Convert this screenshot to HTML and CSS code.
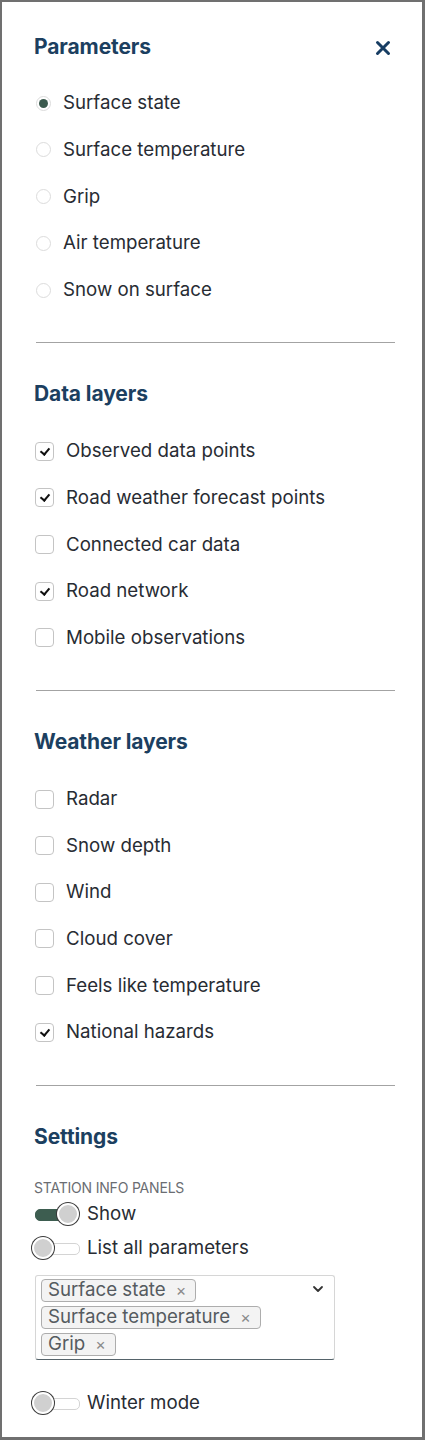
FILE: index.html
```html
<!DOCTYPE html>
<html lang="en">
<head>
<meta charset="utf-8">
<title>Parameters</title>
<link rel="stylesheet" href="styles.css">
</head>
<body>
<div class="panel">
  <section class="section">
    <div class="head-row">
      <h2 class="heading">Parameters</h2>
      <button class="close" aria-label="Close">
        <svg width="16" height="16" viewBox="0 0 16 16"><path d="M2.5 2.5 L13.5 13.5 M13.5 2.5 L2.5 13.5" stroke="#173d63" stroke-width="3" stroke-linecap="round"/></svg>
      </button>
    </div>
    <ul class="list radios">
      <li class="item"><span class="radio on"></span><span class="label r">Surface state</span></li>
      <li class="item"><span class="radio"></span><span class="label r">Surface temperature</span></li>
      <li class="item"><span class="radio"></span><span class="label r">Grip</span></li>
      <li class="item"><span class="radio"></span><span class="label r">Air temperature</span></li>
      <li class="item"><span class="radio"></span><span class="label r">Snow on surface</span></li>
    </ul>
  </section>
  <hr class="divider">
  <section class="section">
    <h2 class="heading">Data layers</h2>
    <ul class="list checks">
      <li class="item"><span class="box on"></span><span class="label">Observed data points</span></li>
      <li class="item"><span class="box on"></span><span class="label">Road weather forecast points</span></li>
      <li class="item"><span class="box"></span><span class="label">Connected car data</span></li>
      <li class="item"><span class="box on"></span><span class="label">Road network</span></li>
      <li class="item"><span class="box"></span><span class="label">Mobile observations</span></li>
    </ul>
  </section>
  <hr class="divider">
  <section class="section">
    <h2 class="heading">Weather layers</h2>
    <ul class="list checks">
      <li class="item"><span class="box"></span><span class="label">Radar</span></li>
      <li class="item"><span class="box"></span><span class="label">Snow depth</span></li>
      <li class="item"><span class="box"></span><span class="label">Wind</span></li>
      <li class="item"><span class="box"></span><span class="label">Cloud cover</span></li>
      <li class="item"><span class="box"></span><span class="label">Feels like temperature</span></li>
      <li class="item"><span class="box on"></span><span class="label">National hazards</span></li>
    </ul>
  </section>
  <hr class="divider">
  <section class="section settings">
    <h2 class="heading">Settings</h2>
    <div class="caption">STATION INFO PANELS</div>
    <div class="toggle-row show-row"><span class="toggle on"><span class="knob"></span></span><span class="label t">Show</span></div>
    <div class="toggle-row list-row"><span class="toggle"><span class="knob"></span></span><span class="label t">List all parameters</span></div>
    <div class="multi">
      <div class="chips">
        <span class="chip">Surface state <span class="x">×</span></span>
        <span class="chip">Surface temperature <span class="x">×</span></span>
        <span class="chip">Grip <span class="x">×</span></span>
      </div>
      <svg class="chev" width="12" height="8" viewBox="0 0 12 8"><path d="M2 2 L6 6 L10 2" fill="none" stroke="#333" stroke-width="1.8" stroke-linecap="round" stroke-linejoin="round"/></svg>
    </div>
    <div class="toggle-row winter-row"><span class="toggle"><span class="knob"></span></span><span class="label t">Winter mode</span></div>
  </section>
</div>
</body>
</html>
```
FILE: styles.css
```css
* { box-sizing: border-box; }
html, body { margin: 0; padding: 0; background: #fff; }
body { font-family: Inter, "Noto Sans", sans-serif; color: #2a2f37; }
.panel {
  width: 425px;
  height: 1440px;
  border-style: solid;
  border-color: #707070;
  border-width: 2px 3px 3px 2px;
  padding: 33px 27px 0 32px;
}
.section { display: flex; flex-direction: column; }
.head-row { display: flex; align-items: center; justify-content: space-between; }
.heading {
  margin: 0;
  font-size: 21px;
  line-height: 24px;
  font-weight: 700;
  color: #1c3f60;
  letter-spacing: -0.1px;
}
.close {
  border: 0; background: none; padding: 0; margin-right: 4px; margin-top: 2px;
  width: 16px; height: 16px; display: flex;
}
.list { list-style: none; margin: 0; padding: 0; display: flex; flex-direction: column; }
.radios { margin-top: 32px; gap: 22.75px; }
.checks { margin-top: 33px; gap: 22.6px; }
.item { display: flex; align-items: center; height: 24px; }
.label { font-size: 18.7px; line-height: 24px; color: #282c33; letter-spacing: 0; }
.radio {
  width: 15px; height: 15px; border-radius: 50%;
  border: 1px solid #dcdcdc; margin-left: 2px; margin-right: 12px;
  flex: none; position: relative; background: #fff;
}
.radio.on::after {
  content: ""; position: absolute; left: 2px; top: 2px;
  width: 9px; height: 9px; border-radius: 50%; background: #3b5a4e;
}
.box {
  width: 19px; height: 19px; border-radius: 4px;
  border: 1.5px solid #c4c4c4; margin-left: 1px; margin-right: 12px;
  flex: none; position: relative; background: #fff;
}
.box.on::after {
  content: ""; position: absolute; left: 6px; top: 3px;
  width: 4px; height: 7px;
  border-right: 2px solid #111; border-bottom: 2px solid #111;
  transform: rotate(40deg);
}
.divider {
  border: 0; border-top: 1px solid #a3a3a3; margin: 40.4px 0 39px 2px; height: 0;
}
.caption {
  margin-top: 31px;
  font-size: 14px; line-height: 16px; color: #6a6d72; letter-spacing: -0.2px;
}
.toggle-row { display: flex; align-items: center; height: 24px; }
.show-row { margin-top: 6px; }
.list-row { margin-top: 10px; }
.winter-row { margin-top: 31px; }
.toggle {
  position: relative; width: 48px; height: 22px; margin-left: -2px; margin-right: 7px; flex: none;
}
.toggle::before {
  content: ""; position: absolute; left: 6px; top: 6px; width: 40px; height: 10px;
  border-radius: 5px; border: 1px solid #d4d4d4; background: #fff;
}
.toggle.on::before { background: #3d5d50; border-color: #3d5d50; left: 3px; width: 36px; }
.knob {
  position: absolute; left: 0; top: 0; width: 22px; height: 22px; border-radius: 50%;
  background: #d0d0d0; border: 2px solid #fff; box-shadow: 0 0 0 1px #3a3a3a;
}
.toggle.on .knob { left: 25px; }
.toggle:not(.on) .knob { left: 0; }
.multi {
  margin-top: 15px; margin-left: 1px; width: 300px;
  border: 1px solid #d6d6d6; border-bottom: 1.5px solid #55636a; border-radius: 3px;
  padding: 3px 6px 3px 5px; display: flex; align-items: flex-start; justify-content: space-between;
}
.chips { display: flex; flex-wrap: wrap; gap: 4px; width: 262px; }
.chip {
  display: inline-flex; align-items: center;
  font-size: 18.7px; line-height: 20px; color: #555b60;
  border: 1px solid #adadad; background: #f3f3f3; border-radius: 4px;
  padding: 0 9px 0 6px; height: 23px; white-space: nowrap;
}
.chip .x { font-size: 16px; color: #8a8a8a; margin-left: 10px; }
.chev { margin-top: 6px; margin-right: 4px; }
```
